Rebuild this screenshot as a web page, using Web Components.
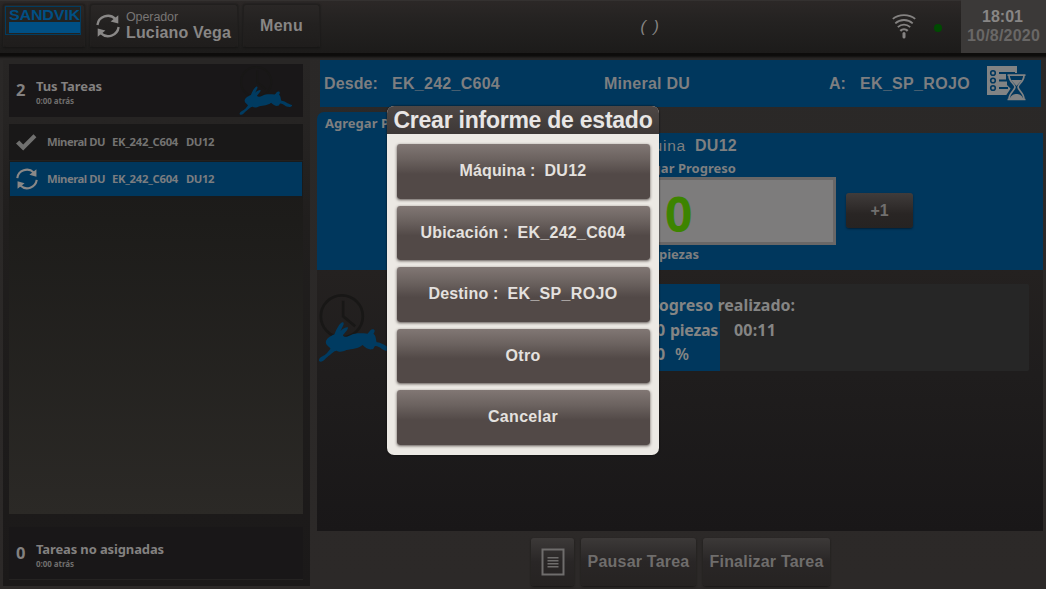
<!DOCTYPE html>
<html lang="es">
<head>
<meta charset="utf-8">
<title>Sandvik - Tareas</title>
<style>
html,body{margin:0;width:1046px;height:589px;overflow:hidden;background:#2b2827;font-family:"Liberation Sans",Arial,sans-serif}
</style>
</head>
<body>
<task-app></task-app>
<script>
const define = (name, html, setup) => customElements.define(name, class extends HTMLElement {
  connectedCallback() {
    if (this.shadowRoot) return;
    const t = document.createElement('template');
    t.innerHTML = html;
    this.attachShadow({mode: 'open'}).append(t.content.cloneNode(true));
    if (setup) setup(this, this.shadowRoot);
  }
});

// Text label: s = font size, w = line width, ui = humanist face, c = colour, weight = font weight
define('ui-text', `<style>
:host{display:block;flex:none;white-space:pre;line-height:1;font-weight:700}
:host([ui]){font-family:"Noto Sans","Open Sans",sans-serif}
span{display:inline-block}
</style><span><slot></slot></span>`, (el, root) => {
  const span = root.querySelector('span');
  const a = n => el.getAttribute(n);
  if (a('s')) el.style.fontSize = a('s') + 'px';
  if (a('c')) el.style.color = a('c');
  if (a('weight')) el.style.fontWeight = a('weight');
  if (a('w')) {
    const w = +a('w');
    const n = el.textContent.length;
    span.style.letterSpacing = (w - span.getBoundingClientRect().width) / n + 'px';
    el.style.width = w + 'px';
  }
});

define('icon-sync', `<style>:host{display:block;flex:none;width:24px;height:24px}svg{display:block;width:100%;height:100%}</style>
<svg viewBox="0 0 24 24"><g fill="none" stroke="#8a8887" stroke-width="2.3"><path d="M1.4 11A10.6 10.4 0 0 1 19.3 4.8"/><path d="M22.6 13A10.6 10.4 0 0 1 4.7 19.2"/></g><path fill="#8a8887" d="M22.3 1.3V9.5L14.6 7.4ZM1.7 22.7V14.5L9.4 16.6Z"/></svg>`);

define('icon-check', `<style>:host{display:block;flex:none;width:21px;height:17px}svg{display:block}</style>
<svg width="21" height="17" viewBox="0 0 21 17"><path fill="#70706f" d="M0 9.6 3.3 6.5 7.2 10.4 17.5.2 20.4 3.3 7.2 16.6Z"/></svg>`);

define('icon-rabbit', `<style>:host{display:block;flex:none}svg{display:block;width:100%;height:100%;overflow:visible}</style>
<svg viewBox="30 98 218 204"><g fill="none" stroke="#181716" stroke-width="8"><circle cx="98" cy="165" r="63"/><path d="M102 118V165L138 195"/></g>
<path fill="#003b61" d="M30 294C32 287 44 285 53 276L64 262C60 256 50 252 50 243C50 233 62 225 76 219C82 203 90 188 99 183C105 182 105 188 101 195L94 209C103 199 113 196 116 198C119 202 107 215 101 222C106 229 115 227 124 222C137 214 158 216 175 217C182 212 181 206 190 204C197 204 199 209 193 217C202 225 199 235 203 243C216 242 228 256 247 260C250 266 241 270 229 268C219 266 209 253 199 254C193 256 196 264 187 264C178 265 169 260 160 251C148 262 128 263 112 266C99 273 88 272 83 268C75 267 67 278 58 284C49 291 43 301 35 301C30 301 28 298 30 294Z"/></svg>`);

define('icon-wifi', `<style>:host{display:block;flex:none}svg{display:block}</style>
<svg width="24" height="25" viewBox="0 0 24 25" fill="none" stroke="#858382" stroke-width="1.8"><path d="M.8 4.9C6.8-.2 17.2-.2 23.200 4.900"/><path d="M3.300 9.300C8.200 4.900 15.800 4.900 20.700 9.300"/><path d="M5.800 13.200C9.500 9.700 14.500 9.700 18.200 13.200"/><path d="M8.300 16.900C10.400 14.800 13.600 14.800 15.700 16.900" stroke-width="2.300"/><path d="M12 19.500V23" stroke-width="3" stroke-linecap="round"/></svg>`);

define('icon-queue', `<style>:host{display:block;flex:none}svg{display:block}</style>
<svg width="39" height="35" viewBox="0 0 39 35"><path fill="#818384" d="M0 0H30V8H20V19L24 23L21 29H0Z"/>
<g fill="none" stroke="#00375d" stroke-width="1.600"><circle cx="6" cy="7" r="2.300"/><circle cx="6" cy="14.500" r="2.300"/><circle cx="6" cy="22" r="2.300"/></g>
<path stroke="#00375d" stroke-width="1.800" d="M12 7H28M12 14.500H21M12 22H21"/>
<path fill="#00375d" stroke="#00375d" stroke-width="4" d="M21 9H38V13L31 21L38 30V34H21V30L27 21L21 13Z"/>
<path fill="none" stroke="#818384" stroke-width="1.700" d="M20.500 9.200H38.500M20.500 33.500H38.500M22 9.500C22 16 28 18 28 21C28 24 22 27 22 33M37 9.500C37 16 31 18 31 21C31 24 37 27 37 33"/>
<path fill="#818384" d="M24 14H35L29.500 20ZM22.500 33C24 29 27 28 29.500 28S35 29 36.500 33Z"/></svg>`);

define('icon-note', `<style>:host{display:block;flex:none}svg{display:block}</style>
<svg width="24" height="28" viewBox="0 0 24 28" fill="none" stroke="#6f6d6c"><path stroke-width="2" d="M1.500 1.500H22.500V26.500H1.500Z"/><path stroke-width="1.600" d="M6.500 9.700H17.500M6.500 12.700H17.500M6.500 15.800H17.500M6.500 18.800H17.500"/></svg>`);

define('sandvik-logo', `<style>
:host{display:block;box-sizing:border-box;width:76px;height:29px;border:1px solid #023c60;padding:1px 2px 0 3px;background:#222322}
i{display:block;width:71px;height:11px;background:#004f84;margin-top:-1px}
ui-text{height:15px;transform:scaleY(.94);transform-origin:top}
</style><ui-text s="16" w="71" c="#004f84">SANDVIK</ui-text><i></i>`);

define('top-button', `<style>
:host{display:flex;flex:none;box-sizing:border-box;height:44px;align-items:center;border:1px solid #211f1e;border-bottom-color:#171615;border-radius:3px;background:linear-gradient(#2a2726,#232120 45%,#1f1d1c);box-shadow:0 0 2px #151413}
</style><slot></slot>`);

define('top-bar', `<style>
:host{display:flex;flex:none;height:53px;box-sizing:border-box;padding-left:3px;background:linear-gradient(#2c2827,#242221 40%,#1c1b1a);box-shadow:inset 0 1px #343130,0 2px 2px 2px #0d0c0b;position:relative;color:#888685}
.btns{display:flex;gap:5px;padding-top:4px;width:318px;flex:none}
.logo{width:82px;align-items:flex-start;padding:1px 0 0 1px}
.op{width:148px;padding-left:5px}
.op div{padding-left:6px}
.menu{width:77px;justify-content:center}
.mid{flex:1;display:flex;justify-content:center;padding:19px 0 0 88px}
.status{display:flex;width:69px;padding-top:14px;flex:none}
.dot{width:8px;height:8px;border-radius:50%;background:#004a02;margin:10px 0 0 18px}
.clock{box-sizing:border-box;width:85px;height:53px;background:#3b3938;padding:9px 0 0 6px}
</style>
<div class="btns">
<top-button class="logo"><sandvik-logo></sandvik-logo></top-button>
<top-button class="op"><icon-sync></icon-sync><div><ui-text s="12.500" w="52" weight="400" c="#777574">Operador</ui-text><ui-text s="16" w="105" style="margin-top:2px">Luciano Vega</ui-text></div></top-button>
<top-button class="menu"><ui-text s="16" w="43">Menu</ui-text></top-button>
</div>
<div class="mid"><ui-text s="16" w="20" weight="400" style="font-style:italic">( )</ui-text></div>
<div class="status"><icon-wifi></icon-wifi><div class="dot"></div></div>
<div class="clock"><ui-text s="16" w="41" style="margin-left:15px">18:01</ui-text><ui-text s="16" w="73" c="#696766" style="margin-top:3px">10/8/2020</ui-text></div>`);

define('task-group', `<style>
:host{display:flex;flex:none;box-sizing:border-box;width:294px;height:53px;padding:0 10px 0 7px;background:#191718;color:#838180}
.n{width:20px;padding-top:18px}
.t{flex:1;padding:13px 0 0}
</style><div class="n"><slot name="n"></slot></div><div class="t"><slot></slot></div><slot name="icon"></slot>`);

define('task-row', `<style>
:host{display:flex;box-sizing:border-box;width:294px;height:37px;align-items:center;padding-left:7px;background:#191818;color:#747372;border-bottom:1px solid #22201f}
:host([active]){height:37px;background:#00375d;color:#7b7d80;border:solid #191b1c;border-width:1px 1px 2px;padding-left:6px}
.i{width:31px;display:flex}
icon-sync,::slotted(icon-sync){width:22px!important;height:22px!important}
</style><div class="i"><slot name="icon"></slot></div>
<ui-text ui s="11.300" w="58">Mineral DU</ui-text><ui-text ui s="11.300" w="66" style="margin-left:7px">EK_242_C604</ui-text><ui-text ui s="11.300" w="28" style="margin-left:8px">DU12</ui-text>`);

define('task-sidebar', `<style>
:host{display:block;flex:none;box-sizing:border-box;width:307px;height:526px;padding:4px 0 0 6px;background:linear-gradient(#282625 0,#262423 60px,#201e1d 160px,#1b1919)}
.list{width:294px;height:390px;margin-top:7px;background:linear-gradient(#1a1818,#1d1c1a 25%,#2b2926)}
.bottom{margin-top:13px;border-bottom:1px solid #252322;height:53px}
icon-rabbit{width:54px;height:49px;margin-top:2px}
</style>
<task-group><ui-text slot="n" ui s="16.500" w="10">2</ui-text><ui-text ui s="13" w="66" style="margin-top:3px">Tus Tareas</ui-text><ui-text ui s="8" w="38" c="#706e6d" style="margin-top:4px">0:00 atrás</ui-text><icon-rabbit slot="icon"></icon-rabbit></task-group>
<div class="list"><task-row><icon-check slot="icon"></icon-check></task-row><task-row active><icon-sync slot="icon"></icon-sync></task-row></div>
<task-group class="bottom"><ui-text slot="n" ui s="16.500" w="10">0</ui-text><ui-text ui s="13" w="128" style="margin-top:3px">Tareas no asignadas</ui-text><ui-text ui s="8" w="38" c="#706e6d" style="margin-top:4px">0:00 atrás</ui-text></task-group>`);

define('route-bar', `<style>
:host{display:flex;align-items:center;box-sizing:border-box;width:721px;height:47px;margin-left:3px;padding-left:4px;background:#00375d;color:#7d7e80}
</style>
<ui-text s="16" w="54">Desde:</ui-text><ui-text s="16" w="108" style="margin-left:14px">EK_242_C604</ui-text><ui-text s="16" w="86" style="margin-left:104px">Mineral DU</ui-text><ui-text s="16" w="17" style="margin-left:139px">A:</ui-text><ui-text s="16" w="110" style="margin-left:14px">EK_SP_ROJO</ui-text><icon-queue style="margin-left:17px"></icon-queue>`);

define('progress-entry', `<style>
:host{display:flex;width:726px;height:158px;margin-top:5px;color:#7e7f80}
.tab{width:205px;box-sizing:border-box;background:#00375d;border-radius:7px 0 0 0;padding:5px 0 0 8px}
.body{display:flex;flex:1;background:#00375d;margin-top:21px}
.col{width:314px;display:flex;flex-direction:column;align-items:center}
.m{display:flex;gap:9px;padding-top:5px;height:18px;flex:none}
.field{box-sizing:border-box;flex:none;width:314px;height:68px;border:3px solid #696767;background:#7d7c7c;display:flex;justify-content:center;align-items:center;margin-top:2px}
.plus{width:67px;height:35px;margin:60px 0 0 10px;border-radius:3px;background:linear-gradient(#403c3b,#292524 60%,#262322);box-shadow:0 1px 2px #001f35;display:flex;justify-content:center;align-items:center}
</style>
<div class="tab"><ui-text ui s="13" w="114">Agregar Progreso</ui-text></div>
<div class="body"><div class="col">
<div class="m"><ui-text s="15.500" w="65" weight="400">Máquina</ui-text><ui-text s="16" w="42">DU12</ui-text></div>
<ui-text ui s="13" w="114" style="margin-top:6px">Agregar Progreso</ui-text>
<div class="field"><ui-text ui s="48" w="28" c="#3d8400" style="margin-top:6px">0</ui-text></div>
<ui-text ui s="13" w="40" style="margin-top:3px">piezas</ui-text>
</div><div class="plus"><ui-text s="16" w="18" c="#716f6e">+1</ui-text></div></div>`);

define('progress-report', `<style>
:host{display:flex;width:726px;height:261px;background:linear-gradient(#242120,#1f1d1d 40%,#191718);color:#858584}
icon-rabbit{width:73px;height:68px;margin:24px 0 0 2px}
.bar{box-sizing:border-box;width:630px;height:87px;margin:14px 0 0 7px;padding:13px 0 0 243px;background:linear-gradient(90deg,#00375d 321px,#262626 321px);border-radius:2px}
.r{display:flex;margin-top:8.500px;height:16px}
</style>
<icon-rabbit></icon-rabbit>
<div class="bar"><ui-text ui s="16" w="153">Progreso realizado:</ui-text>
<div class="r"><ui-text ui s="16" w="10" style="margin-left:14px">0</ui-text><ui-text ui s="16" w="48" style="margin-left:4px">piezas</ui-text><ui-text ui s="16" w="42" style="margin-left:16px">00:11</ui-text></div>
<div class="r"><ui-text ui s="16" w="10" style="margin-left:14px">0</ui-text><ui-text ui s="16" w="14" weight="600" style="margin-left:9px">%</ui-text></div></div>`);

define('action-button', `<style>
:host{display:flex;flex:none;height:48px;justify-content:center;align-items:center;border-radius:3px;background:linear-gradient(#3c3938,#292626 50%,#262322);box-shadow:0 1px 2px #191716;color:#6f6d6c}
</style><slot></slot>`);

define('modal-option', `<style>
:host{display:flex;height:54.500px;justify-content:center;align-items:center;gap:9px;border-radius:3px;background:linear-gradient(#817774 0,#6b625f 28%,#524947 55%,#524947);box-shadow:0 1px 3px #5d5552;color:#e4e1df}
</style><slot></slot>`);

define('status-dialog', `<style>
:host{position:absolute;left:387px;top:106px;width:272px;height:349px;border-radius:7px;overflow:hidden;background:#ece9e4;box-shadow:0 0 2px #0b0a0a}
.title{height:28px;display:flex;justify-content:center;align-items:center;background:linear-gradient(#4e4745,#3d3837);color:#e8e6e5}
.opts{display:flex;flex-direction:column;gap:7px;padding:10px 9.500px 0}
</style>
<div class="title"><ui-text s="23" w="259">Crear informe de estado</ui-text></div>
<div class="opts">
<modal-option><ui-text s="16" w="76">Máquina :</ui-text><ui-text s="16" w="42">DU12</ui-text></modal-option>
<modal-option><ui-text s="16" w="88">Ubicación :</ui-text><ui-text s="16" w="108">EK_242_C604</ui-text></modal-option>
<modal-option><ui-text s="16" w="70">Destino :</ui-text><ui-text s="16" w="110">EK_SP_ROJO</ui-text></modal-option>
<modal-option><ui-text s="16" w="35">Otro</ui-text></modal-option>
<modal-option><ui-text s="16" w="70">Cancelar</ui-text></modal-option>
</div>`);

define('task-app', `<style>
:host{display:block;position:relative;width:1046px;height:589px;background:linear-gradient(#2a2827,#2c2928);overflow:hidden}
.content{display:flex;gap:7px;padding:7px 0 0 3px}
.actions{display:flex;gap:7px;padding:7px 0 0 214px}
</style>
<top-bar></top-bar>
<div class="content"><task-sidebar></task-sidebar>
<main><route-bar></route-bar><progress-entry></progress-entry><progress-report></progress-report>
<div class="actions"><action-button style="width:43px"><icon-note></icon-note></action-button><action-button style="width:115px"><ui-text s="16" w="102">Pausar Tarea</ui-text></action-button><action-button style="width:127px"><ui-text s="16" w="114">Finalizar Tarea</ui-text></action-button></div></main></div>
<status-dialog></status-dialog>`);
</script>
</body>
</html>
